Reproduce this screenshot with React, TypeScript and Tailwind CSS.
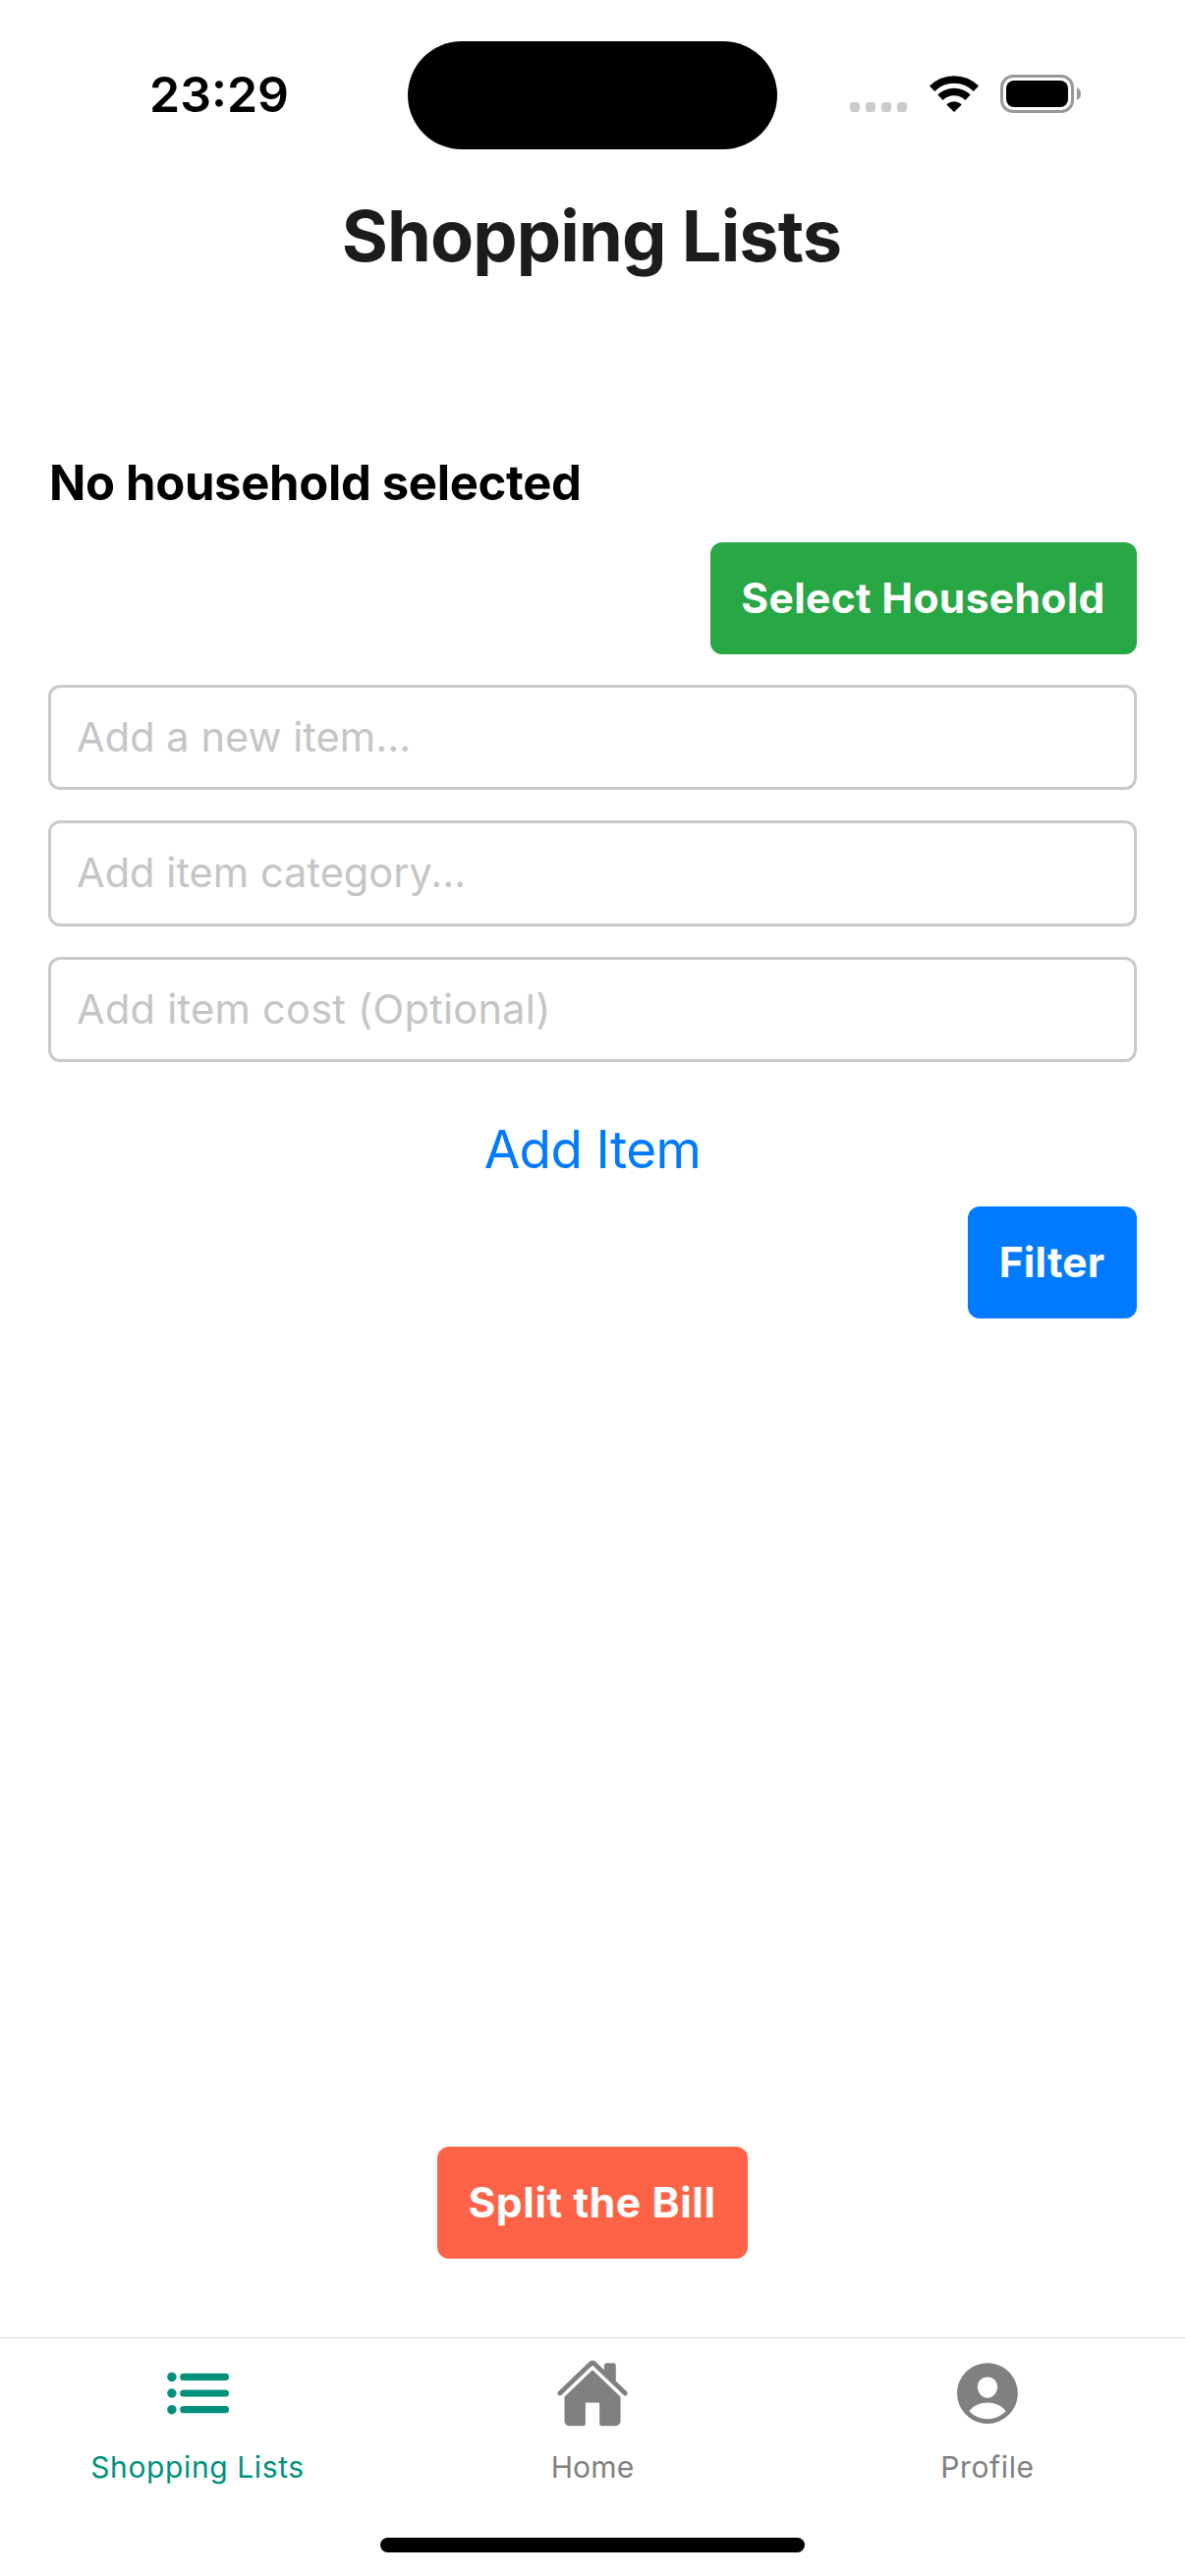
import type { ReactNode } from "react";
import { IoHome, IoList, IoPersonCircle } from "react-icons/io5";

function SignalDots() {
  return (
    <div className="flex gap-[6px] self-end">
      {[0, 1, 2, 3].map((i) => (
        <span key={i} className="size-[10px] rounded-[3px] bg-[#cbcbcb]" />
      ))}
    </div>
  );
}

function WifiIcon() {
  return (
    <svg width="50" height="37" viewBox="0 0 50 37" fill="none">
      <path d="M2.6 13.2 A32 32 0 0 1 47.4 13.2" stroke="#000" strokeWidth="7.6" />
      <path d="M11 22.2 A20 20 0 0 1 39 22.2" stroke="#000" strokeWidth="7.6" />
      <path
        d="M25 37 L17.7 29.9 Q17.3 29.3 17.9 28.8 A11.2 11.2 0 0 1 32.1 28.8 Q32.7 29.3 32.3 29.9 Z"
        fill="#000"
      />
    </svg>
  );
}

function BatteryIcon() {
  return (
    <div className="flex items-center gap-[3px]">
      <div className="h-[39px] w-[75px] rounded-[13px] border-[3px] border-[#999] p-[3px]">
        <div className="h-full rounded-[8px] bg-black" />
      </div>
      <svg width="4" height="13" viewBox="0 0 4 13">
        <path d="M0 0 Q4 2 4 6.5 Q4 11 0 13 Z" fill="#999" />
      </svg>
    </div>
  );
}

function StatusBar() {
  return (
    <div className="grid h-[165px] grid-cols-[415px_376px_415px] pt-[42px]">
      <div className="flex h-[107px] items-center pl-[152px] text-[50px] font-[560] leading-none tracking-[0px]">
        23:29
      </div>
      <div className="h-[110px] rounded-full bg-black" />
      <div className="flex h-[107px] items-center pl-[74px]">
        <div className="flex h-[39px] items-center">
          <div className="flex h-[37px] w-[81px]">
            <SignalDots />
          </div>
          <WifiIcon />
          <div className="ml-[22px]">
            <BatteryIcon />
          </div>
        </div>
      </div>
    </div>
  );
}

function Field({ placeholder, className }: { placeholder: string; className: string }) {
  return (
    <input
      type="text"
      placeholder={placeholder}
      className={`block w-full rounded-[12px] border-[3px] border-[#cacaca] bg-transparent pb-[2px] pl-[26px] text-[41.5px] outline-none placeholder:text-[#c5c5c7] placeholder:opacity-100 ${className}`}
    />
  );
}

function Button({ children, className }: { children: ReactNode; className: string }) {
  return (
    <button
      type="button"
      className={`flex h-[114px] items-center justify-center rounded-[12px] pr-px text-[42.5px] font-bold leading-none text-white ${className}`}
    >
      {children}
    </button>
  );
}

function Tab({ icon, label, className }: { icon: ReactNode; label: string; className: string }) {
  return (
    <a className={`flex flex-1 flex-col items-center pt-[18px] text-[30px] ${className}`}>
      {icon}
      <span className="mt-[14px] leading-[46px]">{label}</span>
    </a>
  );
}

export default function App() {
  return (
    <div className="flex h-[2622px] w-[1206px] flex-col bg-white font-['Inter',sans-serif] text-black">
      <StatusBar />
      <h1 className="pr-[2px] text-center text-[72px] font-bold leading-[149px] tracking-[-0.85px] text-[#1c1c1e]">
        Shopping Lists
      </h1>

      <main className="flex flex-1 flex-col px-[49px] pt-[147px]">
        <h2 className="pl-px text-[49px] font-bold leading-[61px] tracking-[-0.33px]">
          No household selected
        </h2>
        <Button className="mt-[30px] w-[434px] self-end bg-[#28a745] tracking-[0.34px]">
          Select Household
        </Button>

        <div className="mt-[31px] flex flex-col gap-[31px]">
          <Field placeholder="Add a new item..." className="h-[107px] tracking-[0.05px]" />
          <Field placeholder="Add item category..." className="h-[108px] tracking-[0.04px]" />
          <Field placeholder="Add item cost (Optional)" className="h-[107px] tracking-[0.27px]" />
        </div>

        <button
          type="button"
          className="mt-[33px] h-[113px] self-center text-[53px] leading-none tracking-[-0.6px] text-[#007bff]"
        >
          Add Item
        </button>
        <Button className="mt-px w-[172px] self-end bg-[#007bff] tracking-[0.2px]">Filter</Button>

        <Button className="mb-[80px] mt-auto w-[316px] self-center bg-[#ff6347] tracking-[0.62px]">
          Split the Bill
        </Button>
      </main>

      <nav className="flex h-[243px] flex-col border-t border-[#d8d8d8]">
        <div className="flex h-[203px]">
          <Tab icon={<IoList size={76} />} label="Shopping Lists" className="tracking-[0.61px] text-[#00917c]" />
          <Tab icon={<IoHome size={76} />} label="Home" className="tracking-[0.15px] text-[#808080]" />
          <Tab icon={<IoPersonCircle size={76} />} label="Profile" className="tracking-[0.62px] text-[#808080]" />
        </div>
        <div className="h-[15px] w-[432px] self-center rounded-full bg-black" />
      </nav>
    </div>
  );
}
